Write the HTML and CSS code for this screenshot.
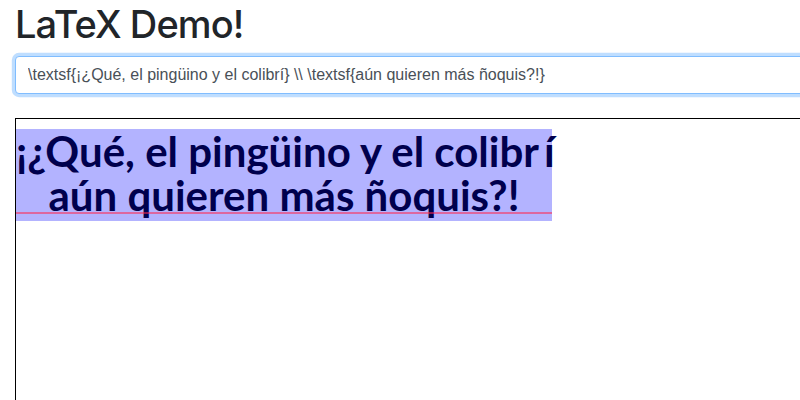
FILE: index.html
```html
<!DOCTYPE html>
<html>
<head>
<meta charset="utf-8">
<link rel="stylesheet" href="styles.css">
</head>
<body>
<div class="container">
  <h1 class="title">LaTeX Demo!</h1>
  <div class="form-group">
    <input class="form-control" type="text" value="\textsf{¡¿Qué, el pingüino y el colibrí} \\ \textsf{aún quieren más ñoquis?!}">
  </div>
  <div class="canvas">
    <div class="render">
      <div class="line">¡¿Qué, el pingüino y el colibr<span class="acc">í</span></div>
      <div class="line">aún quieren más ñoquis?!</div>
      <div class="baseline"></div>
    </div>
  </div>
</div>
</body>
</html>
```

FILE: styles.css
```css
html, body {
  margin: 0;
  padding: 0;
  overflow: hidden;
}
body {
  font-family: "Liberation Sans", Arial, sans-serif;
  color: #212529;
  background: #fff;
}
.container {
  width: 900px;
  padding: 0 15px;
}
.title {
  margin: 0 0 8px 0;
  font-family: Inter, "Liberation Sans", sans-serif;
  font-size: 38px;
  font-weight: 500;
  letter-spacing: -0.9px;
  line-height: 48px;
  color: #212529;
}
.form-group {
  margin-bottom: 24px;
}
.form-control {
  display: block;
  box-sizing: border-box;
  width: 100%;
  height: 38px;
  padding: 6px 12px;
  font-family: "Liberation Sans", Arial, sans-serif;
  font-size: 16px;
  line-height: 24px;
  color: #495057;
  background: #fff;
  border: 1px solid #80bdff;
  border-radius: 4px;
  box-shadow: 0 0 0 3.2px rgba(0, 123, 255, 0.25);
  outline: none;
}
.canvas {
  border: 1px solid #000;
  height: 400px;
  padding-top: 10px;
}
.render {
  position: relative;
  display: inline-block;
  width: 536px;
  height: 92px;
  background: #b3b3ff;
  color: #00004d;
  font-family: Lato, "Open Sans", sans-serif;
  font-weight: 700;
  font-size: 42px;
  line-height: 44px;
  text-align: center;
}
.line {
  white-space: nowrap;
}
.acc {
  margin-left: 5px;
}
.baseline {
  position: absolute;
  left: 0;
  right: 0;
  top: 83px;
  height: 2px;
  background: rgba(255, 40, 80, 0.55);
}
```
